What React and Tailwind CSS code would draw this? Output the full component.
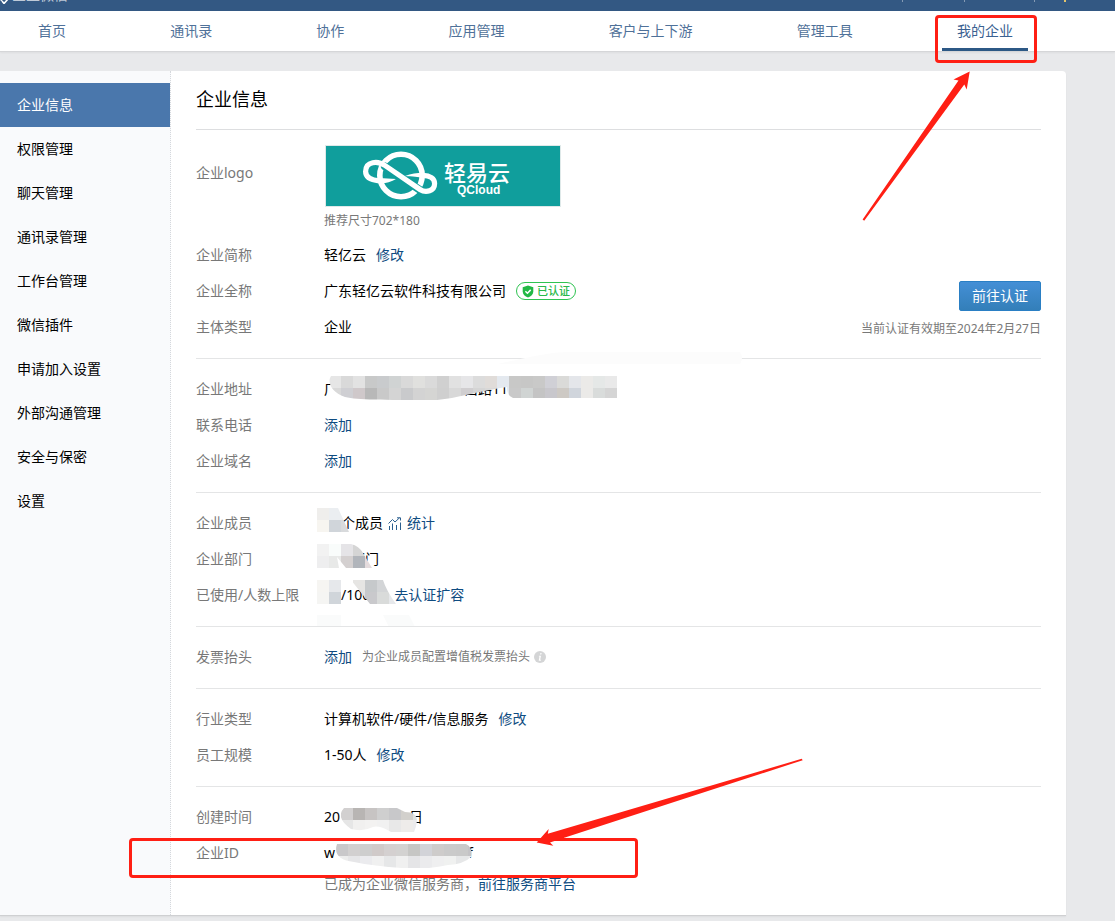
import React from 'react';
import clsx from 'clsx';

const NAV_ITEMS = ['首页', '通讯录', '协作', '应用管理', '客户与上下游', '管理工具', '我的企业'];

const SIDE_ITEMS = [
  '企业信息', '权限管理', '聊天管理', '通讯录管理', '工作台管理',
  '微信插件', '申请加入设置', '外部沟通管理', '安全与保密', '设置',
];

const CELL = 12;

// Pixelated cover for private values
const MOSAICS = {
  address: {
    clip: 'M2 0 C-2 6 2 16 16 21 C30 24 50 24 108 24 C130 22 140 17 178 11 Q178 20 184 22 H288 V0 Z',
    rows: [
      ['#e6e6e6', '#d9d9d9', '#e2e2e2', '#c8c9c9', '#c9cbcd', '#d0d3d3', '#d9d9d9', '#e0e0de', '#dadada', '#d0d0d0', '#e1e1e1', '#e6e6e8', '#dcdcdc', '#e0dcd9', '#e4e9ef', '#c8c8c7', '#c7c7c6', '#c9c9c8', '#d0d0d6', '#dadad8', '#e4e6ea', '#ebeae8', '#e5e8e7', '#e9e9e9'],
      ['#d9d9d9', '#cfcfd3', '#cfc8ca', '#b8b8b8', '#c9c9c9', '#d4d4d4', '#c9cacc', '#d3d3d3', '#d5d5d3', '#cfcfcf', '#d8d8d8', '#d0ced0', '#d5d5d5', '#d8d8d8', '#e4e9ef', '#c9c9c9', '#d0d4d3', '#c4c4c4', '#c8c7cc', '#cdc9c4', '#d0d5dc', '#ebeae8', '#d9dcdb', '#d5d5d5'],
    ],
  },
  members: {
    clip: 'M0 0 H21 L32 24 H0 Z',
    rows: [
      ['#efeeec', '#ebeef1', '#ebeef1'],
      ['#f7f5f0', '#d0d5da', '#d8dadc'],
    ],
  },
  departments: {
    clip: 'M0 0 H34 Q42 2 46 9 L55 24 H29 L20 13 L22 24 H0 Z',
    rows: [
      ['#f2f2f2', '#f9fcfb', '#e5e4e7', '#d5d5d5', '#c9ccd0'],
      ['#eeeeef', '#e8e9e8', '#d4d0d0', '#b1b5bb', '#e4dbdd'],
    ],
  },
  quota: {
    clip: 'M0 0 H24 V24 H0 Z M34 0 H66 Q69 10 79 24 H53 Z',
    rows: [
      ['#f6f5f2', '#e6e8eb', '#fff', '#e6e5e3', '#c6c9cb', '#d3d5d7', '#eceef0'],
      ['#f5f5f3', '#d0d5da', '#fff', '#e1e3e5', '#c9c9cc', '#d9dbda', '#e6e8eb'],
    ],
  },
  created: {
    clip: 'M3 0 H56 L64 4 Q76 4 76 13 Q75 20 73 24 H50 Q38 17 32 19 Q22 24 10 21 Q-6 10 3 0 Z',
    rows: [
      ['#d2d0d0', '#b8b5b3', '#c7c4c3', '#cfcfcf', '#c8c8ca', '#d2d0cc', '#dfe3e2'],
      ['#e6e6e6', '#f1f0ef', '#f3f2f1', '#f1f1f1', '#e8e8e8', '#eeecea', '#ebebed'],
    ],
  },
  corpId: {
    clip: 'M1 0 H130 Q137 3 135 13 Q128 20 112 21 Q90 26 66 24 Q38 22 18 18 Q-4 15 1 0 Z',
    rows: [
      ['#c9c8ca', '#d2d0d0', '#cecece', '#d0cac9', '#d4d0d0', '#d3d2d1', '#c6c6c4', '#d2d3d8', '#cecccb', '#cacaca', '#c9c9c9', '#c4c3c6'],
      ['#ededed', '#e6e6e8', '#ebebee', '#f0f0f0', '#e6e7e8', '#f0f0f0', '#e5e5e7', '#ebebed', '#efeff0', '#f0f1f0', '#e6e7e8', '#e9e9ea'],
    ],
  },
};

function Mosaic({ name, className }) {
  const { clip, rows } = MOSAICS[name];
  return (
    <svg className={clsx('absolute pointer-events-none', className)} width={rows[0].length * CELL} height={rows.length * CELL} aria-hidden="true" shapeRendering="crispEdges">
      <clipPath id={`mosaic-${name}`}><path d={clip} /></clipPath>
      <g clipPath={`url(#mosaic-${name})`}>
        {rows.map((row, y) => row.map((fill, x) => (
          <rect key={`${x}-${y}`} x={x * CELL} y={y * CELL} width={CELL} height={CELL} fill={fill} />
        )))}
      </g>
    </svg>
  );
}

function Link({ children, className }) {
  return <a href="#" className={clsx('text-[#0f4c81] hover:underline', className)}>{children}</a>;
}

function Section({ children }) {
  return <dl className="relative border-t border-[#e4e5e6] pt-3 pb-[13px]">{children}</dl>;
}

function Row({ label, children }) {
  return (
    <div className="relative flex leading-9">
      <dt className="w-32 shrink-0 text-[#787878]">{label}</dt>
      <dd className="relative flex min-w-0 flex-1 items-center whitespace-nowrap">{children}</dd>
    </div>
  );
}

function CompanyLogo() {
  return (
    <svg width="236" height="62" viewBox="0 -1 236 62" role="img" aria-label="轻易云 QCloud">
      <rect x="0.5" y="-0.5" width="235" height="61" fill="#109e9c" stroke="#dfe9e9" />
      <g fill="none" stroke="#fff" strokeLinecap="round">
        <circle cx="76" cy="29.5" r="21.2" strokeWidth="5.6" />
        <path d="M60 20.5 L95 44" stroke="#109e9c" strokeWidth="8" />
        <path d="M54 34.8 C46 34 40.6 31 40.6 25.5 C40.6 15 53 14.5 60 19.5 L95 43.5 C101 47.5 109.6 45 109.6 37.5 C109.6 32.5 105 29.5 98 29.3" strokeWidth="5.2" />
      </g>
      <path d="M54 32.2 C60 32.4 65 32.4 71 32.9 C67 35.6 61 37.4 54 37.4 Z M98 31.9 C93 30.4 88 30.6 80 29.9 C86 27.6 92 26.7 98 26.7 Z" fill="#fff" />
      <text x="119" y="35" fill="#fff" fontSize="22" fontWeight="500" fontFamily="'Noto Sans CJK SC', sans-serif">轻易云</text>
      <text x="132" y="48" fill="#fff" fontSize="12" fontWeight="700" fontFamily="'Liberation Sans', sans-serif">QCloud</text>
    </svg>
  );
}

function VerifiedBadge() {
  return (
    <span className="ml-[10px] flex h-[18px] items-center gap-[3px] rounded-full border border-[#2fc351] px-[5px] text-[11px] leading-4 font-medium text-[#2ab94a]">
      <svg width="12" height="13" viewBox="0 0 12 13" aria-hidden="true">
        <path d="M6 0.5 L11.3 2.3 V6.6 C11.3 9.4 9 11.5 6 12.6 C3 11.5 0.7 9.4 0.7 6.6 V2.3 Z" fill="#22b845" />
        <path d="M3.4 6.3 L5.4 8.2 L8.7 4.9" fill="none" stroke="#fff" strokeWidth="1.5" />
      </svg>
      已认证
    </span>
  );
}

function StatsIcon() {
  return (
    <svg className="ml-[5px]" width="14" height="13" viewBox="0 0 14 13" fill="none" stroke="#2b5f8f" aria-hidden="true">
      <path d="M0.5 6.5 L4.5 2.5 L7 5 L11.5 0.8 M9 0.8 H12.5 V3.5" />
      <path d="M1.5 13 V9 M4.5 13 V6.5 M8.5 13 V8 M12.5 13 V5.5" />
    </svg>
  );
}

function InfoIcon() {
  return (
    <svg className="ml-1" width="12" height="12" viewBox="0 0 12 12" aria-hidden="true">
      <circle cx="6" cy="6" r="6" fill="#d4d5d6" />
      <path d="M6.4 2 H7.6 L7.3 3.5 H6.1 Z M5 4.7 H7 L6.2 8.8 H7 L6.8 9.7 H4.7 L5.5 5.6 H4.8 Z" fill="#fff" />
    </svg>
  );
}

function TopBar() {
  return (
    <header className="flex h-[11px] items-end justify-between overflow-hidden bg-[#335883] pb-[7px] text-sm leading-[14px] text-white/70">
      <div className="flex items-end gap-[3px]">
        <svg width="9" height="5" viewBox="0 0 9 5" aria-hidden="true">
          <path d="M0 0 L2 1.5 M8 0 L4 4.5 L2 2" fill="none" stroke="#fff" strokeWidth="1.6" />
        </svg>
        <span className="pb-0.5">企业微信</span>
      </div>
      <div className="mr-[49px] flex items-end pb-0.5">
        <span className="mr-[61px] h-1 w-px bg-white/40" />
        <span className="mr-[69px] h-1 w-px bg-white/40" />
        <span className="mr-[29px] h-1 w-px bg-white/40" />
        <span className="h-[3px] w-0.5 bg-[#e3c46b]" />
      </div>
    </header>
  );
}

function NavBar() {
  return (
    <nav className="relative z-10 flex h-[41px] justify-between border-b border-[#d5d6d8] bg-white pr-[87px] pl-[23px] shadow-xs">
      {NAV_ITEMS.map((item, i) => {
        const active = i === NAV_ITEMS.length - 1;
        return (
          <div key={item} className="relative">
            <a href="#" className={clsx('block h-10 px-[15px] leading-10', active ? 'border-b-3 border-[#2c5885] text-[#3a6191]' : 'text-[#4f7199]')}>{item}</a>
            {active && (
              <>
                <span className="pointer-events-none absolute top-1 -right-[9px] -left-[7px] h-12 rounded-sm border-3 border-[#ff1f14]" />
                <svg className="pointer-events-none absolute top-[60px] -left-20" width="110" height="151" viewBox="862 71 110 151" fill="#ff1f14" aria-hidden="true">
                  <path d="M969.7 71.5 L953.5 79.6 L958.5 80.5 L862.6 219.6 L864.2 220.8 L964.3 84.5 L966.7 89.5 Z" />
                </svg>
              </>
            )}
          </div>
        );
      })}
    </nav>
  );
}

function Sidebar() {
  return (
    <aside className="w-[171px] shrink-0 border-r border-dotted border-[#d5d8dc] bg-[#f9fafc] pt-3">
      {SIDE_ITEMS.map((item, i) => (
        <a key={item} href="#" className={clsx('block h-11 pl-[17px] leading-11', i === 0 ? 'bg-[#4a77ac] text-white' : 'text-black')}>{item}</a>
      ))}
    </aside>
  );
}

export default function App() {
  return (
    <div className="min-h-screen overflow-hidden bg-[#e8e9eb] font-['Noto_Sans','Noto_Sans_CJK_SC',sans-serif] text-sm text-black">
      <TopBar />
      <NavBar />

      <div className="mt-[19px] mr-[49px] mb-1 flex rounded-tr border-b border-[#cfd0d2] bg-white shadow-xs">
        <Sidebar />

        <main className="min-w-0 flex-1 px-[25px]">
          <h1 className="h-[58px] text-lg leading-[57px]">企业信息</h1>

          <section className="relative border-t border-[#dddee0] pt-[15px] pb-[13px]">
            <dl>
              <div className="flex pb-[7px]">
                <dt className="w-32 shrink-0 pt-[10px] leading-9 text-[#787878]">企业logo</dt>
                <dd>
                  <div className="h-[62px] pl-px"><CompanyLogo /></div>
                  <p className="mt-[5px] text-xs leading-[18px] text-[#787878]">推荐尺寸702*180</p>
                </dd>
              </div>
              <Row label="企业简称">轻亿云<Link className="ml-[10px]">修改</Link></Row>
              <div className="flex">
                <div className="flex-1">
                  <Row label="企业全称">广东轻亿云软件科技有限公司<VerifiedBadge /></Row>
                  <Row label="主体类型">企业</Row>
                </div>
                <div className="flex flex-col items-end pt-2">
                  <button type="button" className="h-[30px] rounded-xs border border-[#2a7fc4] bg-linear-to-b from-[#448fd6] to-[#337fb9] px-[12px] leading-7 text-white">前往认证</button>
                  <p className="mt-[9px] text-xs leading-[18px] text-[#787878]">当前认证有效期至2024年2月27日</p>
                </div>
              </div>
            </dl>
          </section>

          <Section>
            <svg className="pointer-events-none absolute -top-[7px] left-[302px]" width="244" height="12" aria-hidden="true">
              <path d="M0 12 Q50 0 70 0 H242 Q246 6 242 12 Z" fill="#fcfcfc" />
            </svg>
            <Row label="企业地址">
              <span>广</span>
              <span className="ml-[126px]">昌路11</span>
              <Mosaic name="address" className="top-[5px] left-[5px]" />
            </Row>
            <Row label="联系电话"><Link>添加</Link></Row>
            <Row label="企业域名"><Link>添加</Link></Row>
          </Section>

          <Section>
            <Row label="企业成员">
              <span className="ml-[17px]">个成员</span>
              <StatsIcon />
              <Link className="ml-[5px]">统计</Link>
              <Mosaic name="members" className="top-[3px] -left-[7px]" />
            </Row>
            <Row label="企业部门">
              <span className="ml-[27px]">部门</span>
              <Mosaic name="departments" className="top-[3px] -left-[7px]" />
            </Row>
            <Row label="已使用/人数上限">
              <span className="ml-[17px]">/1000</span>
              <Link className="ml-4">去认证扩容</Link>
              <Mosaic name="quota" className="top-[3px] -left-[7px]" />
            </Row>
            <svg className="pointer-events-none absolute -bottom-px left-[121px]" width="98" height="12" aria-hidden="true">
              <path d="M0 0 H24 V12 H0 Z M66 0 H92 L98 12 H72 Z" fill="#fafbfb" />
            </svg>
          </Section>

          <Section>
            <Row label="发票抬头">
              <Link>添加</Link>
              <span className="ml-[10px] text-xs text-[#787878]">为企业成员配置增值税发票抬头</span>
              <InfoIcon />
            </Row>
          </Section>

          <Section>
            <Row label="行业类型">计算机软件/硬件/信息服务<Link className="ml-[10px]">修改</Link></Row>
            <Row label="员工规模">1-50人<Link className="ml-[10px]">修改</Link></Row>
          </Section>

          <Section>
            <Row label="创建时间">
              <span>20</span>
              <span className="ml-[69px]">日</span>
              <Mosaic name="created" className="top-[9px] left-[17px]" />
            </Row>
            <div className="relative">
              <Row label="企业ID">
                <span>w</span>
                <span className="ml-[133px]">f</span>
                <Mosaic name="corpId" className="top-[9px] left-3" />
              </Row>
              <p className="ml-32 pb-[5px] leading-[26px] text-[#787878]">
                已成为企业微信服务商，<Link>前往服务商平台</Link>
              </p>
              <span className="pointer-events-none absolute top-[3px] -left-[67px] h-10 w-[509px] rounded-sm border-3 border-[#ff1f14]" />
              <svg className="pointer-events-none absolute -top-[77px] left-[340px]" width="268" height="89" viewBox="536 758 268 89" fill="#ff1f14" aria-hidden="true">
                <path d="M536.7 842.4 L548.7 829 L547.8 833.8 L801.7 758.8 L802.7 760.2 L565 837.5 L550 842.4 L553.3 845.8 Z" />
              </svg>
            </div>
          </Section>
        </main>
      </div>
    </div>
  );
}
